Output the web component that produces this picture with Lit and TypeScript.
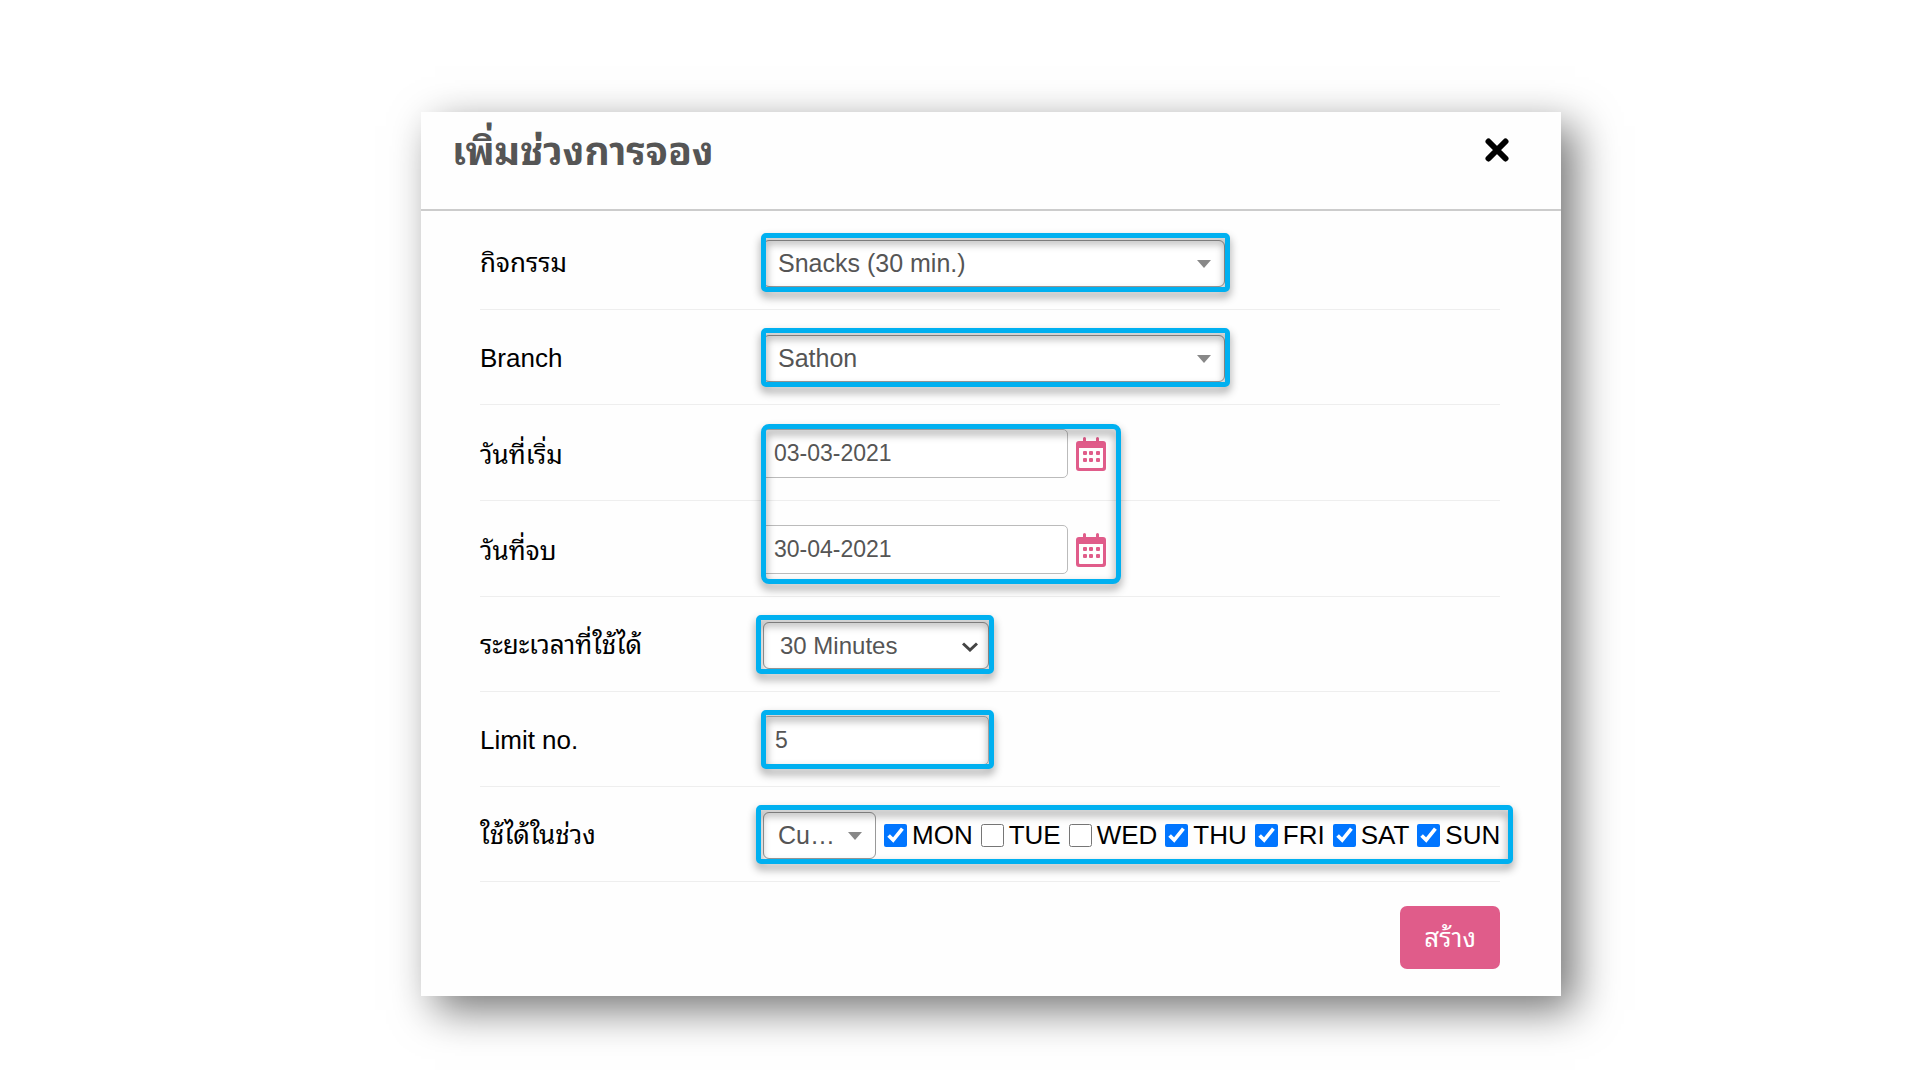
import { LitElement, html, svg, css } from "lit";
import { customElement, state } from "lit/decorators.js";

interface Day {
  name: string;
  on: boolean;
}

const caret = html`<svg class="caret" viewBox="0 0 14 8" aria-hidden="true"><path d="M0 0h14L7 8z" fill="#888" /></svg>`;

const chevron = html`<svg class="chevron" viewBox="0 0 16 10" aria-hidden="true">
  <path d="M1 1.5l7 6.5 7-6.5" fill="none" stroke="#444" stroke-width="3" />
</svg>`;

const dots = [7, 13, 20].map((x) => [14, 21].map((y) => svg`<rect x=${x} y=${y} width="4" height="4" rx="1" />`));

const calendar = html`<svg viewBox="0 0 30 34" width="30" height="34" fill="#e05c8a" aria-hidden="true">
  <path
    fill-rule="evenodd"
    d="M7 1.5Q7 0 8.500 0T10 1.500V4H20V1.500Q20 0 21.500 0T23 1.500V4H27Q30 4 30 7V31Q30 34 27 34H3Q0 34 0 31V7Q0 4 3 4H7ZM3 11V30Q3 31 4 31H26Q27 31 27 30V11Z"
  />
  ${dots}
</svg>`;

@customElement("app-root")
export class AppRoot extends LitElement {
  static styles = css`
    :host {
      display: block;
      box-sizing: border-box;
      min-height: 100vh;
      padding: 112px 359px 84px 421px;
      background: #fff;
      color: #000;
      font-family: "Liberation Sans", Arial, "Noto Sans Thai Looped", Loma, "Noto Sans Thai", sans-serif;
      font-size: 26px;
      line-height: 32px;
    }
    * {
      box-sizing: border-box;
    }
    .modal {
      background: #fefefe;
      box-shadow: 14px 14px 40px rgba(0, 0, 0, 0.54);
    }
    .header {
      display: flex;
      justify-content: space-between;
      align-items: flex-start;
      padding: 18px 48px 35px 31px;
      border-bottom: 2px solid #ccc;
    }
    .title {
      margin: 0;
      font-size: 39px;
      line-height: 44px;
      font-weight: 700;
      color: #555;
    }
    .close {
      display: flex;
      padding: 8px 4px;
      border: 0;
      background: none;
    }
    .body {
      padding: 4px 61px 27px 59px;
    }
    .row {
      display: grid;
      grid-template-columns: 281px 1fr;
      align-items: center;
      height: 95px;
      border-bottom: 1px solid #eee;
    }
    .row > label {
      padding-top: 2px;
    }
    .group {
      position: relative;
    }
    .group .row {
      height: 96px;
      padding-top: 2px;
    }
    .frame {
      position: relative;
      display: flex;
      align-items: center;
      justify-self: start;
      height: 59px;
      padding: 2px 5px 0 2px;
    }
    .frame::after,
    .span {
      content: "";
      position: absolute;
      inset: 0;
      border: 5px solid #00b0f0;
      border-radius: 5px;
      filter: drop-shadow(0 5px 4px rgba(0, 0, 0, 0.42));
      pointer-events: none;
    }
    .span {
      inset: 19px auto 13px 281px;
      width: 360px;
      border-radius: 8px;
    }
    .wide {
      width: 469px;
    }
    .narrow {
      width: 233px;
    }
    .outset {
      margin-left: -5px;
      padding-left: 7px;
    }
    .outset.duration {
      width: 238px;
    }
    .picker {
      position: relative;
      display: flex;
      flex: 1;
    }
    .caret,
    .chevron {
      position: absolute;
      top: 20px;
      right: 14px;
      width: 14px;
      height: 8px;
      pointer-events: none;
    }
    .chevron {
      right: 11px;
      width: 16px;
      height: 10px;
    }
    select,
    input {
      font-family: inherit;
      color: #555;
    }
    select {
      appearance: none;
      width: 100%;
      height: 47px;
      padding: 0 40px 0 14px;
      border: 1px solid #999;
      border-radius: 6px;
      background: #fff;
      font-size: 25px;
      text-overflow: ellipsis;
      overflow: hidden;
      white-space: nowrap;
    }
    .duration select {
      padding-left: 16px;
      font-size: 24px;
    }
    .days .picker {
      flex: none;
      width: 113px;
    }
    .text {
      width: 100%;
      height: 49px;
      padding: 0 11px;
      border: 1px solid #bbb;
      border-radius: 5px;
      background: #fff;
      font-size: 23px;
    }
    .date {
      display: flex;
      align-items: center;
      gap: 8px;
    }
    .date .text {
      width: 307px;
      padding: 0 12px;
    }
    .icon {
      display: flex;
      padding: 0;
      border: 0;
      background: none;
    }
    .days {
      gap: 8px;
      padding-right: 13px;
      white-space: nowrap;
    }
    .day {
      display: flex;
      align-items: center;
      gap: 5px;
    }
    .day input {
      width: 23px;
      height: 23px;
      margin: 0;
    }
    .footer {
      display: flex;
      justify-content: flex-end;
      padding-top: 24px;
    }
    .submit {
      height: 63px;
      padding: 0 24px;
      border: 0;
      border-radius: 7px;
      background: #e05c8a;
      color: #fff;
      font: inherit;
    }
  `;

  @state() private days: Day[] = [
    { name: "MON", on: true },
    { name: "TUE", on: false },
    { name: "WED", on: false },
    { name: "THU", on: true },
    { name: "FRI", on: true },
    { name: "SAT", on: true },
    { name: "SUN", on: true },
  ];

  private toggle(index: number) {
    this.days = this.days.map((d, i) => (i === index ? { ...d, on: !d.on } : d));
  }

  private dateRow(id: string, label: string, value: string) {
    return html`<div class="row">
      <label for=${id}>${label}</label>
      <div class="date">
        <input class="text" id=${id} type="text" .value=${value} />
        <button class="icon" type="button" aria-label=${label}>${calendar}</button>
      </div>
    </div>`;
  }

  private selectRow(id: string, label: string, value: string, frame: string, arrow = caret) {
    return html`<div class="row">
      <label for=${id}>${label}</label>
      <div class="frame ${frame}">
        <div class="picker">
          <select id=${id}><option>${value}</option></select>${arrow}
        </div>
      </div>
    </div>`;
  }

  render() {
    return html`<section class="modal" role="dialog" aria-labelledby="title">
      <header class="header">
        <h1 class="title" id="title">เพิ่มช่วงการจอง</h1>
        <button class="close" type="button" aria-label="Close">
          <svg viewBox="0 0 24 24" width="24" height="24" aria-hidden="true">
            <path d="M3.500 3.500L20.500 20.500M20.500 3.500L3.500 20.500" stroke="#000" stroke-width="6" stroke-linecap="round" />
          </svg>
        </button>
      </header>
      <form class="body">
        ${this.selectRow("activity", "กิจกรรม", "Snacks (30 min.)", "wide")}
        ${this.selectRow("branch", "Branch", "Sathon", "wide")}
        <div class="group">
          ${this.dateRow("start", "วันที่เริ่ม", "03-03-2021")}
          ${this.dateRow("end", "วันที่จบ", "30-04-2021")}
          <div class="span"></div>
        </div>
        ${this.selectRow("duration", "ระยะเวลาที่ใช้ได้", "30 Minutes", "outset duration", chevron)}
        <div class="row">
          <label for="limit">Limit no.</label>
          <div class="frame narrow"><input class="text" id="limit" type="text" .value=${"5"} /></div>
        </div>
        <div class="row">
          <label for="range">ใช้ได้ในช่วง</label>
          <div class="frame outset days">
            <div class="picker">
              <select id="range"><option>Custom</option></select>${caret}
            </div>
            ${this.days.map(
              (d, i) => html`<label class="day">
                <input type="checkbox" .checked=${d.on} @change=${() => this.toggle(i)} />${d.name}
              </label>`
            )}
          </div>
        </div>
        <div class="footer"><button class="submit" type="button">สร้าง</button></div>
      </form>
    </section>`;
  }
}
